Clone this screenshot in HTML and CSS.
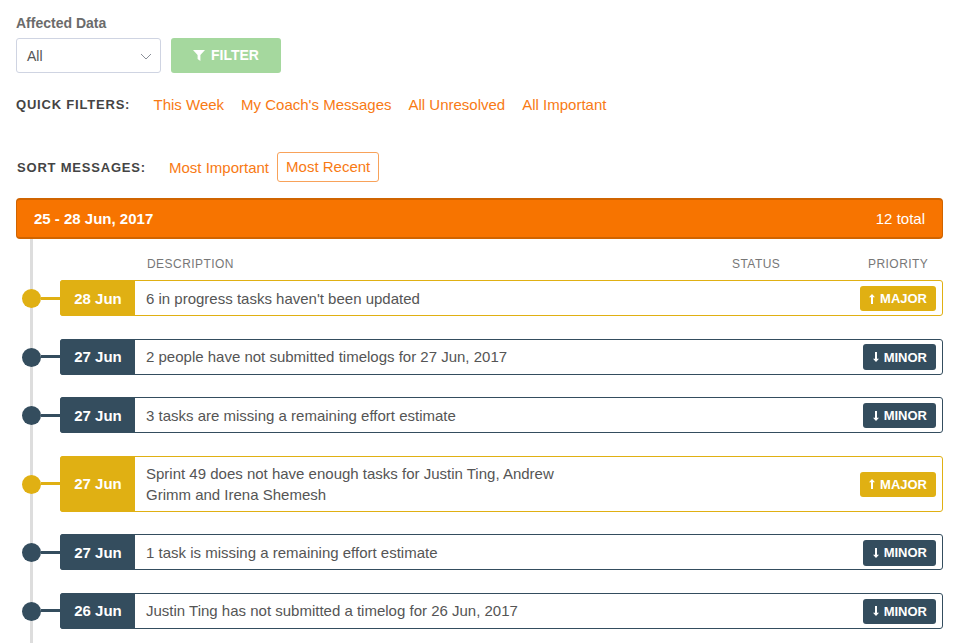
FILE: index.html
```html
<!DOCTYPE html>
<html lang="en">
<head>
<meta charset="utf-8">
<title>Messages</title>
<link rel="stylesheet" href="styles.css">
</head>
<body>
<svg class="defs" width="0" height="0">
  <symbol id="up" viewBox="0 0 6 10"><path d="M3 0L6 3.2H4V10H2V3.2H0z" fill="#fff"/></symbol>
  <symbol id="down" viewBox="0 0 6 10"><path d="M3 10L6 6.8H4V0H2V6.8H0z" fill="#fff"/></symbol>
</svg>
<main class="page">
  <div class="field-label">Affected Data</div>
  <div class="filter-row">
    <div class="select">All
      <svg class="chev" width="12" height="7" viewBox="0 0 12 7"><path d="M1 1l5 5 5-5" fill="none" stroke="#8a8f98" stroke-width="1"/></svg>
    </div>
    <button class="filter-btn"><svg width="12" height="11" viewBox="0 0 12 11"><path d="M0 0h12L7.4 5v6L4.6 9V5z" fill="#fff"/></svg><span>FILTER</span></button>
  </div>
  <div class="quick">
    <span class="caption">QUICK FILTERS:</span>
    <a class="link">This Week</a><a class="link">My Coach's Messages</a><a class="link">All Unresolved</a><a class="link">All Important</a>
  </div>
  <div class="sort">
    <span class="caption">SORT MESSAGES:</span>
    <a class="link">Most Important</a><a class="link active">Most Recent</a>
  </div>
  <div class="group-head"><span class="group-title">25 - 28 Jun, 2017</span><span>12 total</span></div>
  <div class="timeline">
    <div class="cols"><span class="col-desc">DESCRIPTION</span><span class="col-status">STATUS</span><span class="col-pri">PRIORITY</span></div>

    <div class="row major"><div class="date">28 Jun</div><div class="desc">6 in progress tasks haven't been updated</div><div class="badge"><svg class="arrow"><use href="#up"/></svg>MAJOR</div></div>
    <div class="row minor"><div class="date">27 Jun</div><div class="desc">2 people have not submitted timelogs for 27 Jun, 2017</div><div class="badge"><svg class="arrow"><use href="#down"/></svg>MINOR</div></div>
    <div class="row minor"><div class="date">27 Jun</div><div class="desc">3 tasks are missing a remaining effort estimate</div><div class="badge"><svg class="arrow"><use href="#down"/></svg>MINOR</div></div>
    <div class="row major tall"><div class="date">27 Jun</div><div class="desc">Sprint 49 does not have enough tasks for Justin Ting, Andrew Grimm and Irena Shemesh</div><div class="badge"><svg class="arrow"><use href="#up"/></svg>MAJOR</div></div>
    <div class="row minor"><div class="date">27 Jun</div><div class="desc">1 task is missing a remaining effort estimate</div><div class="badge"><svg class="arrow"><use href="#down"/></svg>MINOR</div></div>
    <div class="row minor"><div class="date">26 Jun</div><div class="desc">Justin Ting has not submitted a timelog for 26 Jun, 2017</div><div class="badge"><svg class="arrow"><use href="#down"/></svg>MINOR</div></div>
  </div>
</main>
</body>
</html>
```
FILE: styles.css
```css
* { box-sizing: border-box; }
html, body { margin: 0; height: 100%; overflow: hidden; background: #fff; }
body { font-family: "Liberation Sans", Arial, sans-serif; color: #555; }
.defs { position: absolute; }
.page { height: 643px; padding: 15px 19px 0 16px; display: flex; flex-direction: column; }
.field-label { font-size: 14px; line-height: 17px; font-weight: 700; color: #6b6b6b; }
.filter-row { display: flex; gap: 10px; margin-top: 6px; flex-shrink: 0; }
.select { width: 145px; height: 35px; border: 1px solid #cfd4e2; border-radius: 3px; padding-left: 10px; font-size: 14px; line-height: 34px; color: #555; position: relative; }
.chev { position: absolute; right: 8px; top: 14px; }
.filter-btn { width: 110px; height: 35px; border: 0; border-radius: 3px; background: #a5d89e; color: #fff; font: 700 14px "Liberation Sans", Arial, sans-serif; display: flex; align-items: center; justify-content: center; gap: 6px; padding: 0 0 1px; }
.quick { display: flex; align-items: center; margin-top: 21px; height: 20px; flex-shrink: 0; }
.caption { font-size: 13px; font-weight: 700; letter-spacing: .8px; color: #444; }
.quick .caption { width: 137.5px; }
.link { font-size: 15px; color: #f87a14; margin-right: 17px; }
.sort { display: flex; align-items: center; margin-top: 38px; height: 30px; padding-left: 1px; flex-shrink: 0; }
.sort .caption { width: 152px; padding-top: 1px; }
.sort .link { margin-right: 8px; }
.link.active { border: 1px solid #f8a25a; border-radius: 3px; padding: 0 8px; line-height: 28px; height: 30px; }
.group-head { display: flex; justify-content: space-between; align-items: center; height: 41px; margin-top: 16px; padding: 0 17px; background: #f77400; border: solid #d06400; border-width: 2px 1px; border-radius: 4px; color: #fff; font-size: 15px; flex-shrink: 0; }
.group-title { font-weight: 700; }
.timeline { flex: 1; margin-left: 14px; border-left: 3px solid #ddd; padding-left: 27px; }
.cols { display: flex; height: 41px; padding-top: 18px; font-size: 12px; line-height: 14px; letter-spacing: .45px; color: #777; }
.col-desc { margin-left: 87px; width: 585px; }
.col-status { width: 136px; }
.row { display: flex; align-items: center; min-height: 36px; margin-bottom: 22.6px; border: 1px solid; border-radius: 3px; position: relative; font-size: 15px; }
.row::before { content: ""; position: absolute; left: -39px; top: 50%; width: 19px; height: 19px; margin-top: -9px; border-radius: 50%; background: var(--c); }
.row::after { content: ""; position: absolute; left: -20px; top: 50%; width: 20px; height: 3px; margin-top: -1.5px; background: var(--c); }
.major { --c: #e0b013; border-color: var(--c); }
.minor { --c: #344d5e; border-color: var(--c); }
.date { align-self: stretch; width: 75px; margin: -1px 0 -1px -1px; padding-left: 1px; border-radius: 3px 0 0 3px; background: var(--c); color: #fff; font-weight: 700; font-size: 15px; display: flex; align-items: center; justify-content: center; }
.desc { flex: 1; padding: 0 11px; line-height: 21px; max-width: 440px; }
.badge { margin: 1px 6px 0 auto; height: 25.5px; padding: 0 9px 0 9.5px; border-radius: 3px; background: var(--c); color: #fff; font-size: 13px; font-weight: 700; line-height: 25px; display: flex; align-items: center; gap: 5px; }
.minor .badge { padding-left: 10px; }
.arrow { width: 6px; height: 10px; }
.tall { min-height: 56px; }
```
